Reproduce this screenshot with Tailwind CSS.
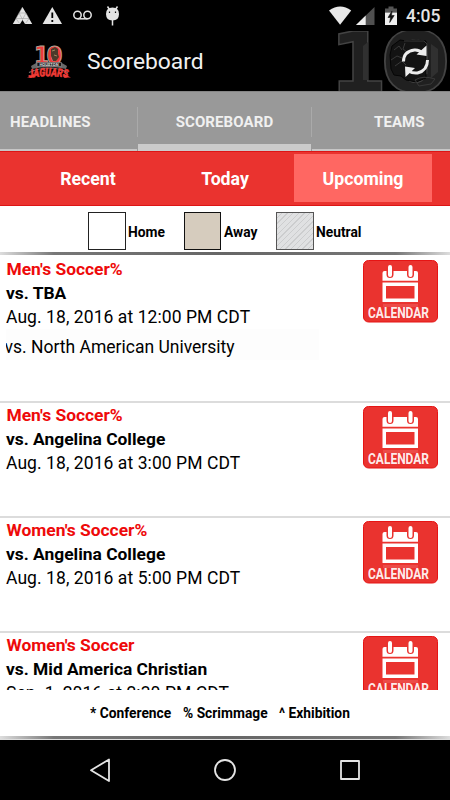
<!DOCTYPE html>
<html lang="en">
<head>
  <meta charset="UTF-8">
  <title>Scoreboard</title>
  <script src="https://cdn.jsdelivr.net/npm/@tailwindcss/browser@4"></script>
</head>
<body class="bg-white text-black font-['Roboto',sans-serif]">
  <!-- calendar button, used by every game row -->
  <svg class="hidden">
    <symbol id="calendar" viewBox="0 0 75 63">
      <rect x=".5" y=".5" width="74" height="61.500" rx="5" fill="#ea332f" stroke="#e61414"/>
      <path d="M19.5 13q0-2 2-2h31.500q2 0 2 2v7.700h-35.500z" fill="#fff"/>
      <path d="M27 6.500v8M47.500 6.500v8" stroke="#ea332f" stroke-width="7" stroke-linecap="round"/>
      <path d="M27 7v8M47.500 7v8" stroke="#fff" stroke-width="4" stroke-linecap="round"/>
      <path d="M19.500 22.500h35.500v19.500h-35.500zM23 26v12.500h28.500v-12.500z" fill="#fff" fill-rule="evenodd"/>
      <rect x="20" y="44" width="35" height="3" fill="#fff" opacity=".12"/>
      <text x="5" y="57.500" font-size="14.500" font-weight="700" fill="#fff" fill-opacity=".92" textLength="61" lengthAdjust="spacingAndGlyphs">CALENDAR</text>
    </symbol>
  </svg>

  <div class="w-[450px] h-[800px] flex flex-col overflow-hidden">
    <div class="h-[31px] bg-black shrink-0 flex items-center">
      <svg width="130" height="31" viewBox="0 0 130 31" fill="#e4e4e4">
        <path d="M22.500 7l9.700 17h-7.200l-2.500-4-2.500 4h-7.200z"/>
        <path d="M19 13h7M16 18.500h13M22.500 7l-3.500 6 3.500 6.500 3.500-6.500M19 13l-3 5.500 3.500 5M26 13l3 5.500-3.500 5" fill="none" stroke="#999" stroke-width=".5"/>
        <path d="M52.300 7l9.700 17h-19.400z"/>
        <path d="M52.300 12.500v5.500M52.300 20v2" stroke="#000" stroke-width="1.800"/>
        <g fill="none" stroke="#e4e4e4" stroke-width="1.500">
          <circle cx="77.500" cy="15" r="3.700"/><circle cx="87.500" cy="15" r="3.700"/><path d="M77.500 18.800h10"/>
        </g>
        <path d="M107.500 6.500l2 3M117.500 6.500l-2 3M112.500 20v5.500" stroke="#e4e4e4" stroke-width="1.500"/>
        <path d="M106 14q0-6.500 6.500-6.500t6.500 6.500q0 6.500-6.500 6.500t-6.500-6.500z"/>
        <path d="M109.500 11.500v1.500M115.500 11.500v1.500" stroke="#111" stroke-width="1.200"/>
      </svg>
      <svg class="ml-auto" width="80" height="31" viewBox="325 0 80 31">
        <path d="M329 10.500q11.300-8 22.200 0l-11.100 14.200z" fill="#e8e8e8"/>
        <path d="M374.500 7v18h-18.500z" fill="#505050"/>
        <path d="M365.700 15.500v9.500h-9.700z" fill="#eee"/>
        <path d="M388.500 6.500h5v2h3.500v4h-12v-4h3.500z" fill="#555"/>
        <path d="M385 12.500h12v12.500h-12z" fill="#eee"/>
        <path d="M392 11l-4 6.500h2.500l-.800 5 4.500-7h-2.700z" fill="#111" stroke="#111" stroke-width=".6"/>
      </svg>
      <span class="w-[45px] pl-[1px] pt-[1px] text-[17.5px] font-medium text-[#e4e4e4]">4:05</span>
    </div>

    <header class="relative h-[60px] bg-black shrink-0 flex items-center pl-[26px]">
      <svg width="46" height="60" viewBox="26 31 46 60">
        <g font-family="DejaVu Sans" font-size="25" font-weight="bold" fill="#ef3b3a" stroke="#b3a596" stroke-width="1">
          <text x="34" y="63.500" textLength="15" lengthAdjust="spacingAndGlyphs">1</text>
          <text x="46.500" y="63.500" textLength="16" lengthAdjust="spacingAndGlyphs">0</text>
        </g>
        <path d="M51 49l4-2 3 2v5l1 3-3 4h-3l-2-5z" fill="#4c3929"/>
        <path d="M52 51l3-1M54 55l3 1" stroke="#a08560"/>
        <path d="M31 66l6-3.500h24l6 3.500-1 3q-17-4-34 0z" fill="#6a6a6a"/>
        <path d="M37 62.500h24.500v4q-12-1.500-24.500 0z" fill="#161616" stroke="#999" stroke-width=".6"/>
        <text x="39.500" y="66" font-size="4" font-weight="bold" fill="#ddd" textLength="19" lengthAdjust="spacingAndGlyphs">HOUSTON</text>
        <path d="M29 72.500q20-9 39 0" fill="none" stroke="#777" stroke-width="1.200"/>
        <path id="arc" d="M29 78q20-3.500 41 0" fill="none"/>
        <text font-size="11.500" font-weight="900" font-style="italic" fill="#ef3b36" stroke="#ef3b36" stroke-width=".5"><textPath href="#arc" textLength="39" lengthAdjust="spacingAndGlyphs">JAGUARS</textPath></text>
        <path d="M34 74l-7 3.500h7zM64 74l7 3.500h-7z" fill="#ef3b36"/>
      </svg>
      <h1 class="ml-[15px] mt-[3px] text-[22.8px] text-[#f1f1f1]">Scoreboard</h1>
      <svg class="absolute right-0 top-0" width="114" height="60" viewBox="336 31 114 60">
        <g font-family="DejaVu Sans" font-size="83" font-weight="bold" fill="#202020" stroke="#434343" stroke-width="1.500">
          <text x="329.500" y="91.500">1</text>
          <text x="380" y="91.500" textLength="71" lengthAdjust="spacingAndGlyphs">0</text>
        </g>
        <path d="M363 80v-34l5-4v38zM431 78v-34l7 5v23z" fill="#303030"/>
        <path d="M390 55l2-9 8-6 7 1 9-1 10 1v37l-10 4-10-2-5-4-7-1-3-6z" fill="#131313" stroke="#050505"/>
        <path d="M394 50l5-4 3 4M391 60l6-4 5 2M395 66l7-5 4 4M405 43l-2 6 4 3M404 41h20l3 3v30M415 80q8-5 20-1l-4 5-12 2z" fill="none" stroke="#393939"/>
        <g fill="none" stroke="#ececec" stroke-width="3">
          <path d="M403.500 61.500q0-10 11-11.500 5-.3 8 3"/>
          <path d="M427.500 60q0 10.500-10 13-5 .5-9-2"/>
        </g>
        <path d="M426.500 45.500v10.500l-10-1.500zM405 66.500l10 1.500-9.500 9z" fill="#ececec"/>
      </svg>
    </header>

    <nav class="h-[60px] shrink-0 flex bg-[#999] border-t border-t-[#858585] text-[15px] font-bold leading-[22px] text-[#f0f0f0]">
      <div class="w-[137px] border-b-2 border-b-[#c6c6c6] pt-[19px] pl-[10px] tracking-[.1px]">HEADLINES</div>
      <div class="w-px h-[30px] mt-[15px] bg-[#aaa]"></div>
      <div class="w-[173px] border-b-[7px] border-b-[#cbcbcb] pt-[19px] text-center tracking-[.1px]">SCOREBOARD</div>
      <div class="w-px h-[30px] mt-[15px] bg-[#aaa]"></div>
      <div class="w-[138px] border-b-2 border-b-[#c6c6c6] pt-[19px] pl-[62px] tracking-[.1px]">TEAMS</div>
    </nav>

    <div class="h-[55px] shrink-0 flex bg-[#ea332f] border-y border-[#dd1515] pt-[2px] pl-[18px] text-[17.7px] font-bold text-white">
      <div class="w-[138px] h-12 flex items-center justify-center pt-[3px] pl-[2px]">Recent</div>
      <div class="w-[138px] h-12 flex items-center justify-center pt-[3px]">Today</div>
      <div class="w-[138px] h-12 flex items-center justify-center pt-[3px] bg-[#ff6762]">Upcoming</div>
    </div>

    <div class="h-[46px] shrink-0 flex pt-[6px] pl-[88px] text-[13.8px] font-bold leading-[41px]">
      <div class="w-[38px] h-[38px] border border-[#222]"></div>
      <span class="w-[58px] pl-[2px]">Home</span>
      <div class="w-[37px] h-[38px] border border-[#111] bg-[#d6ccbe]"></div>
      <span class="w-[55px] pl-[3px]">Away</span>
      <div class="w-[38px] h-[38px] border border-[#555] bg-[repeating-linear-gradient(135deg,#e0e1e2_0px,#e0e1e2_3px,#cccdce_3px,#cccdce_4px)]"></div>
      <span class="pl-[2px]">Neutral</span>
    </div>
    <div class="h-[3px] shrink-0 bg-[linear-gradient(90deg,#ddd,#777_12%,#666_50%,#777_88%,#ddd)]"></div>

    <main class="h-[435px] shrink-0 overflow-hidden pt-[2px] text-[17.5px] leading-6">
      <div class="h-[146px] border-b-2 border-[#dcdcdc] flex justify-between pl-[6px] pr-3">
        <div>
          <p class="text-[17.4px] font-bold text-[#ee0a0a] pl-[.5px]">Men's Soccer%</p>
          <p class="text-[17.4px] font-bold">vs. TBA</p>
          <p class="tracking-[.07px]">Aug. 18, 2016 at 12:00 PM CDT</p>
          <div class="w-[313px] h-[31px] bg-[#fdfdfd] overflow-hidden pt-[6px]"><p class="-ml-[1.5px]">vs. North American University</p></div>
        </div>
        <svg class="mt-[3px]" width="75" height="63"><use href="#calendar"/></svg>
      </div>
      <div class="h-[115px] border-b-2 border-[#dcdcdc] flex justify-between pl-[6px] pr-3">
        <div>
          <p class="text-[17.4px] font-bold text-[#ee0a0a] pl-[.5px]">Men's Soccer%</p>
          <p class="text-[17.4px] font-bold">vs. Angelina College</p>
          <p class="tracking-[.07px]">Aug. 18, 2016 at 3:00 PM CDT</p>
        </div>
        <svg class="mt-[3px]" width="75" height="63"><use href="#calendar"/></svg>
      </div>
      <div class="h-[115px] border-b-2 border-[#dcdcdc] flex justify-between pl-[6px] pr-3">
        <div>
          <p class="text-[17.4px] font-bold text-[#ee0a0a] pl-[.5px]">Women's Soccer%</p>
          <p class="text-[17.4px] font-bold">vs. Angelina College</p>
          <p class="tracking-[.07px]">Aug. 18, 2016 at 5:00 PM CDT</p>
        </div>
        <svg class="mt-[3px]" width="75" height="63"><use href="#calendar"/></svg>
      </div>
      <div class="h-[115px] flex justify-between pl-[6px] pr-3">
        <div>
          <p class="text-[17.4px] font-bold text-[#ee0a0a] pl-[.5px]">Women's Soccer</p>
          <p class="text-[17.4px] font-bold">vs. Mid America Christian</p>
          <p class="tracking-[.07px]">Sep. 1, 2016 at 2:30 PM CDT</p>
        </div>
        <svg class="mt-[3px]" width="75" height="63"><use href="#calendar"/></svg>
      </div>
    </main>

    <footer class="h-[46px] shrink-0 flex pl-[90px] text-[13.8px] font-bold leading-[46px]">
      <span class="w-[93px]">* Conference</span>
      <span class="w-[96px]">% Scrimmage</span>
      <span>^ Exhibition</span>
    </footer>
    <div class="h-[3px] shrink-0 bg-[linear-gradient(90deg,#ddd,#777_12%,#666_50%,#777_88%,#ddd)]"></div>
    <div class="h-px shrink-0 bg-[#ddd]"></div>

    <div class="h-[60px] shrink-0 bg-black">
      <svg width="450" height="60" viewBox="0 740 450 60" fill="none" stroke="#e4e4e4" stroke-width="1.800" stroke-linejoin="round">
        <path d="M109 759.500v21.500l-18-10.800z"/>
        <circle cx="225" cy="770" r="10"/>
        <rect x="341" y="761" width="18" height="18"/>
      </svg>
    </div>
  </div>
</body>
</html>
